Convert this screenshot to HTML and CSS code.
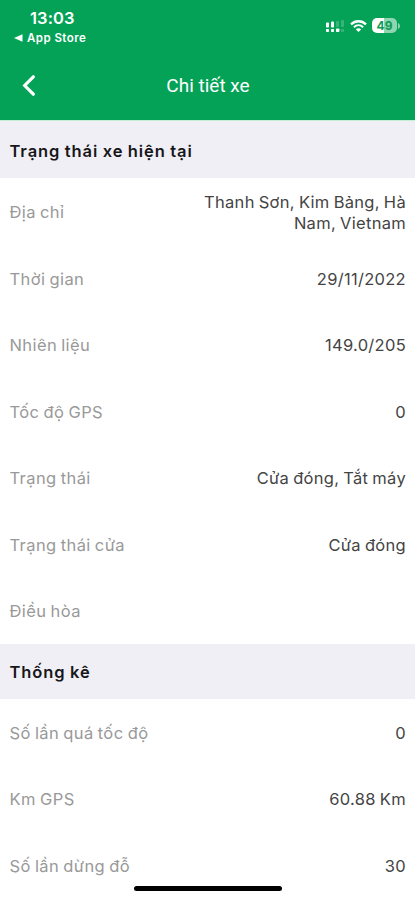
FILE: index.html
```html
<!DOCTYPE html>
<html lang="vi">
<head>
    <meta charset="UTF-8">
    <meta name="viewport" content="width=device-width, initial-scale=1.0">
    <title>Chi tiết xe</title>
    <link rel="stylesheet" href="styles.css">
</head>
<body>
    <!-- Header -->
    <div class="header">
        <div class="status-bar">
            <div class="status-left">
                <div class="time">13:03</div>
                <div class="back-app">
                    <svg width="9" height="8" viewBox="0 0 9 8"><path d="M0 4L8.5 0.3V7.7Z" fill="#fff"/></svg>
                    <span>App Store</span>
                </div>
            </div>
            <div class="status-icons">
                <svg class="signal" width="18" height="12" viewBox="0 0 18 12" fill="#fff">
                    <rect x="0" y="2.5" width="3" height="5" rx="0.8"/>
                    <rect x="5" y="1.5" width="3" height="6" rx="0.8"/>
                    <rect x="0" y="9" width="3" height="3" rx="0.8"/>
                    <rect x="5" y="9" width="3" height="3" rx="0.8"/>
                    <rect x="10" y="8.5" width="3.4" height="3.5" rx="0.8"/>
                    <g opacity="0.2">
                        <rect x="10" y="1" width="3" height="6" rx="0.8"/>
                        <rect x="15" y="0" width="3" height="7" rx="0.8"/>
                        <rect x="15" y="9" width="3" height="3" rx="0.8"/>
                    </g>
                </svg>
                <svg class="wifi" width="17" height="12" viewBox="0 0 17 12" fill="none" stroke="#fff">
                    <path d="M1 4.3C5.3 0.2 11.7 0.2 16 4.3" stroke-width="2.3"/>
                    <path d="M3.9 7.2C6.6 4.7 10.4 4.7 13.1 7.2" stroke-width="2"/>
                    <path d="M8.5 12L5.9 9.4C7.3 8 9.7 8 11.1 9.4Z" fill="#fff" stroke="none"/>
                </svg>
                <div class="battery"><span>49</span></div>
                <svg class="battery-tip" width="2" height="6" viewBox="0 0 2 6"><path d="M0 0C2.6 1 2.6 5 0 6Z" fill="#8fd5b0"/></svg>
            </div>
        </div>
        <div class="nav-bar">
            <svg class="back" width="13" height="21" viewBox="0 0 13 21"><path d="M11.3 1.8L2.7 10.5L11.3 19.2" fill="none" stroke="#fff" stroke-width="3.2" stroke-linecap="round"/></svg>
            <h1>Chi tiết xe</h1>
        </div>
    </div>

    <!-- Current status -->
    <h2 class="section-title first">Trạng thái xe hiện tại</h2>
    <div class="row"><span class="label">Địa chỉ</span><span class="value">Thanh Sơn, Kim Bảng, Hà Nam, Vietnam</span></div>
    <div class="row"><span class="label">Thời gian</span><span class="value">29/11/2022</span></div>
    <div class="row"><span class="label">Nhiên liệu</span><span class="value">149.0/205</span></div>
    <div class="row"><span class="label">Tốc độ GPS</span><span class="value">0</span></div>
    <div class="row"><span class="label">Trạng thái</span><span class="value">Cửa đóng, Tắt máy</span></div>
    <div class="row"><span class="label">Trạng thái cửa</span><span class="value">Cửa đóng</span></div>
    <div class="row"><span class="label">Điều hòa</span><span class="value"></span></div>

    <!-- Statistics -->
    <h2 class="section-title">Thống kê</h2>
    <div class="row"><span class="label">Số lần quá tốc độ</span><span class="value">0</span></div>
    <div class="row"><span class="label">Km GPS</span><span class="value">60.88 Km</span></div>
    <div class="row"><span class="label">Số lần dừng đỗ</span><span class="value">30</span></div>

    <div class="home-indicator"></div>
</body>
</html>
```
FILE: styles.css
```css
* {
    box-sizing: border-box;
}

body {
    margin: 0;
    height: 900px;
    overflow: hidden;
    background-color: #fff;
    font-family: Inter, "Noto Sans", sans-serif;
    font-size: 16.5px;
    position: relative;
}

/* Header styles */
.header {
    height: 120px;
    background-color: #03a257;
    color: #fff;
}

.status-bar {
    display: flex;
    justify-content: space-between;
    height: 50px;
    padding: 8px 15px 0 14px;
}

.time {
    padding-left: 16px;
    font-size: 16.5px;
    line-height: 20px;
    font-weight: 600;
    letter-spacing: 0.1px;
}

.back-app {
    display: flex;
    align-items: center;
    gap: 4px;
    font-size: 11.5px;
    line-height: 20px;
    font-weight: 600;
    letter-spacing: 0.45px;
}

.status-icons {
    display: flex;
    align-items: center;
    height: 15px;
    margin-top: 10px;
}

.signal {
    margin-top: 1px;
}

.wifi {
    margin: 0 5px 0 6px;
}

.battery {
    width: 25px;
    height: 15px;
    border-radius: 5px;
    background: linear-gradient(to right, #fff 49%, #8fd5b0 49%);
    color: #109a58;
    font-size: 12px;
    line-height: 15px;
    font-weight: 700;
    text-align: center;
}

.battery-tip {
    margin-left: 1px;
}

.nav-bar {
    display: grid;
    grid-template-columns: 60px 1fr 60px;
    align-items: center;
    height: 70px;
}

.back {
    margin-left: 22px;
}

.nav-bar h1 {
    margin: 0;
    padding-left: 1px;
    font-family: Roboto, sans-serif;
    font-size: 19px;
    font-weight: 400;
    text-align: center;
}

/* Section titles */
.section-title {
    display: flex;
    align-items: center;
    height: 55px;
    margin: 0;
    padding: 2px 9.5px 0;
    background-color: #f0eff5;
    color: #17171a;
    font-size: 16.5px;
    font-weight: 600;
    letter-spacing: 0.9px;
    word-spacing: -0.5px;
}

.section-title.first {
    height: 58px;
    padding-top: 2px;
    border-top: 1px solid #c5eed8;
}

/* Rows */
.row {
    display: flex;
    align-items: center;
    justify-content: space-between;
    height: 66.5px;
    padding: 3px 9px 0 9.5px;
    line-height: 21px;
    letter-spacing: 0.3px;
    word-spacing: -0.9px;
}

.label {
    color: #999;
    letter-spacing: 0.4px;
}

.value {
    max-width: 215px;
    color: #444;
    text-align: right;
}

.home-indicator {
    position: absolute;
    left: 134px;
    bottom: 9px;
    width: 148px;
    height: 5px;
    border-radius: 3px;
    background-color: #000;
}
```
